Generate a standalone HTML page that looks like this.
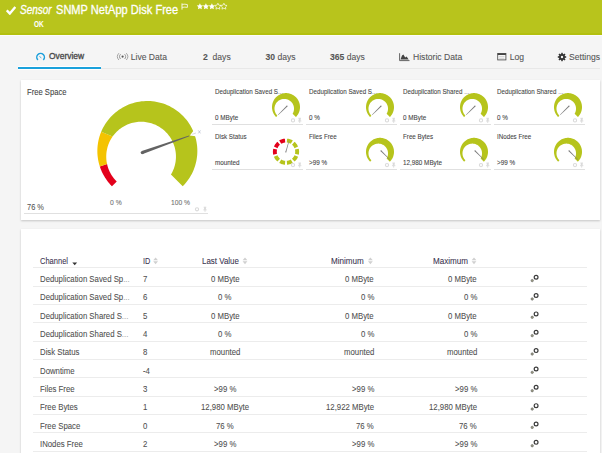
<!DOCTYPE html>
<html><head><meta charset="utf-8">
<style>
html,body{margin:0;padding:0;}
body{width:602px;height:453px;overflow:hidden;position:relative;background:#f5f5f5;font-family:"Liberation Sans",sans-serif;color:#4a4a4a;}
.a{position:absolute;white-space:nowrap;line-height:1;transform-origin:0 0;-webkit-text-stroke-width:0.08px;}
#hdr{position:absolute;left:0;top:0;width:602px;height:35px;background:#b8c41c;box-shadow:inset 0 -2px 0 #b3c00f;}
.panel{position:absolute;background:#fff;box-shadow:0 1px 2px rgba(0,0,0,0.2);}
.tab{font-size:8.6px;color:#555;}
.tt{font-size:6.6px;color:#444;}
.tv{font-size:6.6px;color:#444;}
.ul{position:absolute;height:1px;background:#e0e0e0;}
.row{position:absolute;left:33px;width:554px;height:1px;background:#ececec;}
.c{font-size:7.8px;color:#4f4f4f;}
.h{font-size:8px;color:#3a3350;}
</style></head><body>
<div id="hdr"></div>
<div style="position:absolute;left:0;top:35px;width:602px;height:1px;background:#fbfbfb"></div>
<div style="position:absolute;left:18px;top:68px;width:582px;height:1px;background:#e8e8e8"></div>
<div style="position:absolute;left:18px;top:66px;width:83px;height:4px;background:#fff"></div><div style="position:absolute;left:18px;top:67px;width:83px;height:2px;background:#1ba1db"></div>
<div class="panel" style="left:21px;top:80px;width:579px;height:140px"></div>
<div class="panel" style="left:21px;top:229px;width:579px;height:240px"></div>
<div class="ul" style="left:24px;top:213px;width:184px"></div>
<div class="a" style="left:215.00px;top:87.85px;font-size:7.27px;color:#444;transform:scaleX(0.857);">Deduplication Saved S<span style="color:#8a8a8a">...</span></div>
<div class="a" style="left:215.00px;top:114.94px;font-size:6.69px;color:#444;transform:scaleX(0.946);">0 MByte</div>
<div class="ul" style="left:212px;top:124.0px;width:91px"></div>
<div class="a" style="left:309.00px;top:87.85px;font-size:7.27px;color:#444;transform:scaleX(0.857);">Deduplication Saved S<span style="color:#8a8a8a">...</span></div>
<div class="a" style="left:309.00px;top:114.94px;font-size:6.69px;color:#444;transform:scaleX(0.946);">0 %</div>
<div class="ul" style="left:306px;top:124.0px;width:91px"></div>
<div class="a" style="left:403.00px;top:87.85px;font-size:7.27px;color:#444;transform:scaleX(0.857);">Deduplication Shared <span style="color:#8a8a8a">...</span></div>
<div class="a" style="left:403.00px;top:114.94px;font-size:6.69px;color:#444;transform:scaleX(0.946);">0 MByte</div>
<div class="ul" style="left:400px;top:124.0px;width:91px"></div>
<div class="a" style="left:497.00px;top:87.85px;font-size:7.27px;color:#444;transform:scaleX(0.857);">Deduplication Shared <span style="color:#8a8a8a">...</span></div>
<div class="a" style="left:497.00px;top:114.94px;font-size:6.69px;color:#444;transform:scaleX(0.946);">0 %</div>
<div class="ul" style="left:494px;top:124.0px;width:91px"></div>
<div class="a" style="left:215.00px;top:132.55px;font-size:7.27px;color:#444;transform:scaleX(0.857);">Disk Status</div>
<div class="a" style="left:215.00px;top:159.86px;font-size:6.69px;color:#444;transform:scaleX(0.946);">mounted</div>
<div class="ul" style="left:212px;top:168.7px;width:91px"></div>
<div class="a" style="left:309.00px;top:132.55px;font-size:7.27px;color:#444;transform:scaleX(0.857);">Files Free</div>
<div class="a" style="left:309.00px;top:159.86px;font-size:6.69px;color:#444;transform:scaleX(0.946);">&gt;99 %</div>
<div class="ul" style="left:306px;top:168.7px;width:91px"></div>
<div class="a" style="left:403.00px;top:132.55px;font-size:7.27px;color:#444;transform:scaleX(0.857);">Free Bytes</div>
<div class="a" style="left:403.00px;top:159.86px;font-size:6.69px;color:#444;transform:scaleX(0.946);">12,980 MByte</div>
<div class="ul" style="left:400px;top:168.7px;width:91px"></div>
<div class="a" style="left:497.00px;top:132.55px;font-size:7.27px;color:#444;transform:scaleX(0.857);">INodes Free</div>
<div class="a" style="left:497.00px;top:159.86px;font-size:6.69px;color:#444;transform:scaleX(0.946);">&gt;99 %</div>
<div class="ul" style="left:494px;top:168.7px;width:91px"></div>
<div class="a " style="left:6px;top:2px;"><svg width="10" height="9" viewBox="0 0 10 9"><path d="M0.8,4.3 L3.8,7.6 L9.3,1" stroke="#fff" stroke-width="2.3" fill="none"/></svg></div>
<div class="a" style="left:20.00px;top:4.34px;font-size:12.35px;color:#fff;transform:scaleX(0.809);font-style:italic;-webkit-text-stroke:0.3px #fff;">Sensor</div>
<div class="a" style="left:56.40px;top:4.12px;font-size:12.50px;color:#fff;transform:scaleX(0.885);-webkit-text-stroke:0.3px #fff;">SNMP NetApp Disk Free</div>
<div class="a" style="left:34.00px;top:21.09px;font-size:8.28px;color:#fff;transform:scaleX(0.781);font-weight:bold;">OK</div>
<div class="a" style="left:49.20px;top:51.82px;font-size:9.30px;color:#4a4a4a;transform:scaleX(0.907);-webkit-text-stroke:0.35px #4a4a4a;">Overview</div>
<div class="a tab" style="left:130.7px;top:53.2px;">Live Data</div>
<div class="a tab" style="left:203px;top:53.2px;"><b>2</b>&nbsp; days</div>
<div class="a tab" style="left:265.5px;top:53.2px;"><b>30</b> days</div>
<div class="a tab" style="left:330px;top:53.2px;"><b>365</b> days</div>
<div class="a tab" style="left:413px;top:53.2px;">Historic Data</div>
<div class="a tab" style="left:509.7px;top:53.2px;">Log</div>
<div class="a tab" style="left:569px;top:53.2px;">Settings</div>
<div class="a" style="left:27.00px;top:88.12px;font-size:8.72px;color:#444;transform:scaleX(0.876);">Free Space</div>
<div class="a" style="left:27.00px;top:201.68px;font-size:9.59px;color:#555;transform:scaleX(0.778);">76 %</div>
<div class="a" style="left:109.60px;top:199.20px;font-size:7.56px;color:#707070;transform:scaleX(0.898);">0 %</div>
<div class="a" style="left:171.00px;top:199.20px;font-size:7.56px;color:#707070;transform:scaleX(0.887);">100 %</div>
<div class="a" style="left:39.70px;top:256.00px;font-size:9.45px;color:#3a3350;transform:scaleX(0.796);">Channel</div>
<div class="a" style="left:142.70px;top:256.00px;font-size:9.45px;color:#3a3350;transform:scaleX(0.773);">ID</div>
<div class="a" style="left:202.00px;top:256.00px;font-size:9.45px;color:#3a3350;transform:scaleX(0.842);">Last Value</div>
<div class="a" style="left:331.20px;top:256.00px;font-size:9.45px;color:#3a3350;transform:scaleX(0.856);">Minimum</div>
<div class="a" style="left:432.50px;top:256.00px;font-size:9.45px;color:#3a3350;transform:scaleX(0.857);">Maximum</div>
<div class="row" style="top:267px"></div>
<div class="a" style="left:39.70px;top:274.92px;font-size:9.30px;color:#505050;transform:scaleX(0.838);">Deduplication Saved Sp<span style="color:#aaa">...</span></div>
<div class="a" style="left:143.10px;top:274.92px;font-size:9.30px;color:#505050;transform:scaleX(0.838);">7</div>
<div class="a" style="left:210.90px;top:274.92px;font-size:9.30px;color:#505050;transform:scaleX(0.838);">0 MByte</div>
<div class="a" style="left:345.41px;top:274.92px;font-size:9.30px;color:#505050;transform:scaleX(0.838);">0 MByte</div>
<div class="a" style="left:448.41px;top:274.92px;font-size:9.30px;color:#505050;transform:scaleX(0.838);">0 MByte</div>
<div class="row" style="top:285.65px"></div>
<div class="a" style="left:39.70px;top:293.27px;font-size:9.30px;color:#505050;transform:scaleX(0.838);">Deduplication Saved Sp<span style="color:#aaa">...</span></div>
<div class="a" style="left:143.10px;top:293.27px;font-size:9.30px;color:#505050;transform:scaleX(0.838);">6</div>
<div class="a" style="left:218.48px;top:293.27px;font-size:9.30px;color:#505050;transform:scaleX(0.838);">0 %</div>
<div class="a" style="left:360.57px;top:293.27px;font-size:9.30px;color:#505050;transform:scaleX(0.838);">0 %</div>
<div class="a" style="left:463.57px;top:293.27px;font-size:9.30px;color:#505050;transform:scaleX(0.838);">0 %</div>
<div class="row" style="top:304.00px"></div>
<div class="a" style="left:39.70px;top:311.62px;font-size:9.30px;color:#505050;transform:scaleX(0.838);">Deduplication Shared S<span style="color:#aaa">...</span></div>
<div class="a" style="left:143.10px;top:311.62px;font-size:9.30px;color:#505050;transform:scaleX(0.838);">5</div>
<div class="a" style="left:210.90px;top:311.62px;font-size:9.30px;color:#505050;transform:scaleX(0.838);">0 MByte</div>
<div class="a" style="left:345.41px;top:311.62px;font-size:9.30px;color:#505050;transform:scaleX(0.838);">0 MByte</div>
<div class="a" style="left:448.41px;top:311.62px;font-size:9.30px;color:#505050;transform:scaleX(0.838);">0 MByte</div>
<div class="row" style="top:322.35px"></div>
<div class="a" style="left:39.70px;top:329.97px;font-size:9.30px;color:#505050;transform:scaleX(0.838);">Deduplication Shared S<span style="color:#aaa">...</span></div>
<div class="a" style="left:143.10px;top:329.97px;font-size:9.30px;color:#505050;transform:scaleX(0.838);">4</div>
<div class="a" style="left:218.48px;top:329.97px;font-size:9.30px;color:#505050;transform:scaleX(0.838);">0 %</div>
<div class="a" style="left:360.57px;top:329.97px;font-size:9.30px;color:#505050;transform:scaleX(0.838);">0 %</div>
<div class="a" style="left:463.57px;top:329.97px;font-size:9.30px;color:#505050;transform:scaleX(0.838);">0 %</div>
<div class="row" style="top:340.70px"></div>
<div class="a" style="left:39.70px;top:348.32px;font-size:9.30px;color:#505050;transform:scaleX(0.838);">Disk Status</div>
<div class="a" style="left:143.10px;top:348.32px;font-size:9.30px;color:#505050;transform:scaleX(0.838);">8</div>
<div class="a" style="left:210.03px;top:348.32px;font-size:9.30px;color:#505050;transform:scaleX(0.838);">mounted</div>
<div class="a" style="left:343.66px;top:348.32px;font-size:9.30px;color:#505050;transform:scaleX(0.838);">mounted</div>
<div class="a" style="left:446.66px;top:348.32px;font-size:9.30px;color:#505050;transform:scaleX(0.838);">mounted</div>
<div class="row" style="top:359.05px"></div>
<div class="a" style="left:39.70px;top:366.67px;font-size:9.30px;color:#505050;transform:scaleX(0.838);">Downtime</div>
<div class="a" style="left:143.10px;top:366.67px;font-size:9.30px;color:#505050;transform:scaleX(0.838);">-4</div>
<div class="row" style="top:377.40px"></div>
<div class="a" style="left:39.70px;top:385.02px;font-size:9.30px;color:#505050;transform:scaleX(0.838);">Files Free</div>
<div class="a" style="left:143.10px;top:385.02px;font-size:9.30px;color:#505050;transform:scaleX(0.838);">3</div>
<div class="a" style="left:214.04px;top:385.02px;font-size:9.30px;color:#505050;transform:scaleX(0.838);">&gt;99 %</div>
<div class="a" style="left:351.68px;top:385.02px;font-size:9.30px;color:#505050;transform:scaleX(0.838);">&gt;99 %</div>
<div class="a" style="left:454.68px;top:385.02px;font-size:9.30px;color:#505050;transform:scaleX(0.838);">&gt;99 %</div>
<div class="row" style="top:395.75px"></div>
<div class="a" style="left:39.70px;top:403.37px;font-size:9.30px;color:#505050;transform:scaleX(0.838);">Free Bytes</div>
<div class="a" style="left:143.10px;top:403.37px;font-size:9.30px;color:#505050;transform:scaleX(0.838);">1</div>
<div class="a" style="left:201.15px;top:403.37px;font-size:9.30px;color:#505050;transform:scaleX(0.838);">12,980 MByte</div>
<div class="a" style="left:325.91px;top:403.37px;font-size:9.30px;color:#505050;transform:scaleX(0.838);">12,922 MByte</div>
<div class="a" style="left:428.91px;top:403.37px;font-size:9.30px;color:#505050;transform:scaleX(0.838);">12,980 MByte</div>
<div class="row" style="top:414.10px"></div>
<div class="a" style="left:39.70px;top:421.72px;font-size:9.30px;color:#505050;transform:scaleX(0.838);">Free Space</div>
<div class="a" style="left:143.10px;top:421.72px;font-size:9.30px;color:#505050;transform:scaleX(0.838);">0</div>
<div class="a" style="left:216.32px;top:421.72px;font-size:9.30px;color:#505050;transform:scaleX(0.838);">76 %</div>
<div class="a" style="left:356.24px;top:421.72px;font-size:9.30px;color:#505050;transform:scaleX(0.838);">76 %</div>
<div class="a" style="left:459.24px;top:421.72px;font-size:9.30px;color:#505050;transform:scaleX(0.838);">76 %</div>
<div class="row" style="top:432.45px"></div>
<div class="a" style="left:39.70px;top:440.07px;font-size:9.30px;color:#505050;transform:scaleX(0.838);">INodes Free</div>
<div class="a" style="left:143.10px;top:440.07px;font-size:9.30px;color:#505050;transform:scaleX(0.838);">2</div>
<div class="a" style="left:214.04px;top:440.07px;font-size:9.30px;color:#505050;transform:scaleX(0.838);">&gt;99 %</div>
<div class="a" style="left:351.68px;top:440.07px;font-size:9.30px;color:#505050;transform:scaleX(0.838);">&gt;99 %</div>
<div class="a" style="left:454.68px;top:440.07px;font-size:9.30px;color:#505050;transform:scaleX(0.838);">&gt;99 %</div>
<div class="row" style="top:450.80px"></div>
<svg style="position:absolute;left:0;top:0" width="602" height="453" viewBox="0 0 602 453">
<path d="M111.99,186.36 L111.58,185.94 L111.17,185.51 L110.77,185.08 L110.37,184.65 L109.97,184.21 L109.59,183.77 L109.20,183.32 L108.82,182.87 L108.45,182.42 L108.08,181.95 L107.72,181.49 L107.37,181.02 L107.01,180.55 L106.67,180.07 L106.33,179.59 L106.00,179.10 L105.67,178.62 L105.35,178.12 L105.03,177.63 L104.72,177.12 L104.41,176.62 L104.11,176.11 L103.82,175.60 L103.53,175.09 L103.25,174.57 L102.98,174.05 L102.71,173.52 L102.45,173.00 L102.19,172.47 L101.94,171.93 L101.70,171.40 L101.46,170.86 L101.23,170.32 L101.01,169.77 L100.79,169.22 L100.58,168.67 L100.37,168.12 L100.17,167.57 L99.98,167.01 L99.80,166.45 L107.06,164.09 L107.18,164.58 L107.29,165.07 L107.42,165.55 L107.55,166.04 L107.69,166.52 L107.84,167.00 L107.99,167.48 L108.15,167.96 L108.32,168.44 L108.50,168.91 L108.68,169.38 L108.87,169.85 L109.06,170.32 L109.27,170.78 L109.48,171.24 L109.69,171.70 L109.92,172.16 L110.15,172.61 L110.38,173.06 L110.62,173.51 L110.87,173.95 L111.13,174.39 L111.39,174.82 L111.66,175.25 L111.94,175.68 L112.22,176.10 L112.51,176.52 L112.80,176.94 L113.10,177.35 L113.41,177.76 L113.72,178.16 L114.04,178.56 L114.36,178.95 L114.69,179.34 L115.03,179.72 L115.37,180.10 L115.71,180.48 L116.07,180.84 L116.42,181.21 L116.78,181.57Z" fill="#e3001b"/>
<path d="M99.80,166.45 L99.53,165.61 L99.28,164.76 L99.05,163.91 L98.82,163.05 L98.62,162.19 L98.43,161.33 L98.25,160.47 L98.09,159.60 L97.95,158.72 L97.82,157.85 L97.71,156.97 L97.61,156.10 L97.53,155.22 L97.46,154.34 L97.41,153.45 L97.37,152.57 L97.35,151.69 L97.35,150.80 L97.36,149.92 L97.39,149.04 L97.43,148.15 L97.49,147.27 L97.56,146.39 L97.65,145.51 L97.76,144.64 L97.88,143.76 L98.01,142.89 L98.16,142.02 L98.33,141.15 L98.51,140.28 L98.71,139.42 L98.92,138.57 L99.15,137.71 L99.39,136.86 L99.65,136.02 L99.92,135.18 L100.21,134.34 L100.51,133.51 L100.83,132.69 L101.16,131.87 L112.57,136.59 L112.18,137.15 L111.80,137.73 L111.44,138.31 L111.08,138.90 L110.73,139.50 L110.40,140.11 L110.08,140.72 L109.76,141.35 L109.46,141.98 L109.18,142.62 L108.90,143.27 L108.63,143.93 L108.38,144.59 L108.15,145.26 L107.92,145.94 L107.71,146.62 L107.51,147.31 L107.33,148.01 L107.16,148.71 L107.00,149.41 L106.86,150.13 L106.73,150.84 L106.62,151.56 L106.52,152.28 L106.44,153.01 L106.37,153.74 L106.31,154.47 L106.28,155.21 L106.26,155.95 L106.25,156.68 L106.26,157.43 L106.29,158.17 L106.33,158.91 L106.38,159.65 L106.46,160.39 L106.55,161.14 L106.65,161.88 L106.77,162.62 L106.91,163.35 L107.06,164.09Z" fill="#f4c300"/>
<path d="M101.16,131.87 L102.05,129.84 L103.02,127.86 L104.09,125.93 L105.24,124.04 L106.47,122.21 L107.78,120.43 L109.17,118.71 L110.63,117.06 L112.17,115.47 L113.77,113.95 L115.44,112.51 L117.17,111.13 L118.96,109.84 L120.81,108.63 L122.71,107.50 L124.65,106.45 L126.64,105.49 L128.67,104.62 L130.74,103.84 L132.84,103.15 L134.96,102.56 L137.11,102.06 L139.29,101.65 L141.47,101.35 L143.67,101.14 L145.88,101.02 L148.09,101.01 L150.29,101.09 L152.50,101.27 L154.69,101.54 L156.86,101.91 L159.02,102.38 L161.16,102.94 L163.27,103.60 L165.34,104.35 L167.39,105.19 L169.39,106.12 L171.35,107.14 L173.27,108.24 L175.13,109.43 L176.94,110.69 L178.69,112.04 L180.38,113.46 L182.00,114.96 L183.56,116.52 L185.05,118.16 L186.46,119.85 L187.80,121.61 L189.06,123.43 L190.24,125.29 L191.33,127.21 L192.34,129.18 L193.26,131.19 L194.09,133.23 L194.83,135.32 L195.47,137.43 L196.03,139.57 L196.48,141.73 L196.84,143.91 L197.11,146.10 L197.28,148.30 L197.35,150.51 L197.32,152.72 L197.20,154.92 L196.97,157.12 L196.66,159.31 L196.24,161.48 L195.73,163.62 L195.13,165.75 L194.43,167.84 L193.64,169.91 L192.76,171.93 L191.79,173.92 L190.73,175.86 L189.59,177.75 L188.37,179.59 L187.07,181.37 L185.69,183.10 L184.23,184.76 L182.71,186.36 L170.94,174.59 L171.70,173.28 L172.38,171.96 L173.01,170.62 L173.56,169.27 L174.06,167.92 L174.50,166.56 L174.87,165.19 L175.19,163.83 L175.45,162.48 L175.65,161.13 L175.80,159.78 L175.90,158.45 L175.95,157.13 L175.94,155.82 L175.89,154.52 L175.79,153.24 L175.64,151.97 L175.45,150.72 L175.22,149.49 L174.94,148.28 L174.63,147.09 L174.27,145.92 L173.88,144.77 L173.45,143.64 L172.98,142.53 L172.48,141.45 L171.95,140.38 L171.38,139.35 L170.78,138.33 L170.14,137.34 L169.48,136.37 L168.78,135.43 L168.06,134.51 L167.30,133.62 L166.51,132.75 L165.70,131.91 L164.86,131.10 L163.99,130.32 L163.09,129.56 L162.16,128.83 L161.21,128.14 L160.23,127.47 L159.22,126.83 L158.19,126.23 L157.13,125.65 L156.04,125.12 L154.93,124.61 L153.80,124.15 L152.64,123.72 L151.46,123.32 L150.25,122.97 L149.02,122.66 L147.77,122.39 L146.50,122.17 L145.21,121.99 L143.90,121.86 L142.58,121.78 L141.23,121.75 L139.88,121.77 L138.51,121.85 L137.13,121.98 L135.74,122.17 L134.34,122.41 L132.94,122.72 L131.54,123.09 L130.14,123.52 L128.74,124.02 L127.35,124.58 L125.97,125.21 L124.60,125.90 L123.25,126.67 L121.93,127.50 L120.62,128.40 L119.35,129.37 L118.11,130.41 L116.91,131.51 L115.75,132.69 L114.64,133.92 L113.57,135.23 L112.57,136.59Z" fill="#b6c41c"/>
<path d="M194.63,129.35 L197.29,136.49 L189.85,135.61Z" fill="#fff"/>
<path d="M142.84,154.11 L189.37,136.32 L189.06,135.47 L141.76,151.09Z" fill="#636363"/><circle cx="142.30" cy="152.60" r="1.60" fill="#636363"/>
<path d="M192.2,134.3 L196,133" stroke="#b8b8b8" stroke-width="0.5"/><path d="M198.3,130.4 l2.2,3 M200.5,130.4 l-2.2,3" stroke="#a8b0c4" stroke-width="0.6"/>
<path d="M276.10,117.00 L275.53,116.40 L275.01,115.77 L274.51,115.11 L274.06,114.41 L273.65,113.70 L273.29,112.96 L272.96,112.20 L272.69,111.43 L272.45,110.63 L272.27,109.83 L272.13,109.02 L272.04,108.20 L272.00,107.37 L272.01,106.55 L272.07,105.73 L272.17,104.91 L272.33,104.10 L272.53,103.30 L272.77,102.51 L273.07,101.74 L273.40,100.99 L273.79,100.26 L274.21,99.55 L274.67,98.87 L275.18,98.22 L275.72,97.60 L276.30,97.01 L276.91,96.45 L277.55,95.94 L278.22,95.46 L278.92,95.02 L279.64,94.63 L280.39,94.27 L281.15,93.97 L281.94,93.70 L282.73,93.49 L283.54,93.32 L284.35,93.20 L285.18,93.12 L286.00,93.10 L286.82,93.12 L287.65,93.20 L288.46,93.32 L289.27,93.49 L290.06,93.70 L290.85,93.97 L291.61,94.27 L292.36,94.63 L293.08,95.02 L293.78,95.46 L294.45,95.94 L295.09,96.45 L295.70,97.01 L296.28,97.60 L296.82,98.22 L297.33,98.87 L297.79,99.55 L298.21,100.26 L298.60,100.99 L298.93,101.74 L299.23,102.51 L299.47,103.30 L299.67,104.10 L299.83,104.91 L299.93,105.73 L299.99,106.55 L300.00,107.37 L299.96,108.20 L299.87,109.02 L299.73,109.83 L299.55,110.63 L299.31,111.43 L299.04,112.20 L298.71,112.96 L298.35,113.70 L297.94,114.41 L297.49,115.11 L296.99,115.77 L296.47,116.40 L295.90,117.00 L292.61,113.71 L292.88,113.22 L293.13,112.72 L293.34,112.22 L293.52,111.71 L293.67,111.20 L293.80,110.69 L293.89,110.19 L293.95,109.68 L293.99,109.19 L294.01,108.69 L294.00,108.21 L293.96,107.73 L293.91,107.26 L293.83,106.79 L293.73,106.34 L293.61,105.90 L293.47,105.46 L293.31,105.04 L293.13,104.63 L292.94,104.23 L292.73,103.84 L292.50,103.46 L292.26,103.09 L292.00,102.74 L291.73,102.40 L291.44,102.07 L291.14,101.76 L290.82,101.45 L290.49,101.17 L290.15,100.89 L289.79,100.63 L289.42,100.39 L289.03,100.16 L288.64,99.95 L288.23,99.76 L287.81,99.58 L287.37,99.42 L286.93,99.28 L286.47,99.17 L286.00,99.07 L285.52,98.99 L285.03,98.94 L284.54,98.91 L284.03,98.91 L283.52,98.94 L283.01,98.99 L282.49,99.07 L281.97,99.18 L281.44,99.32 L280.92,99.50 L280.40,99.70 L279.89,99.94 L279.38,100.21 L278.88,100.52 L278.40,100.86 L277.93,101.24 L277.48,101.64 L277.05,102.09 L276.64,102.56 L276.26,103.07 L275.91,103.60 L275.59,104.16 L275.31,104.75 L275.07,105.37 L274.86,106.00 L274.70,106.66 L274.58,107.32 L274.51,108.00 L274.49,108.69 L274.52,109.38 L274.59,110.08 L274.72,110.77 L274.90,111.45 L275.12,112.12 L275.40,112.77 L275.72,113.40 L276.08,114.01 L276.50,114.59 L276.95,115.14 L277.44,115.66Z" fill="#b6c41c"/>
<path d="M286.61,105.71 L277.98,114.76 L278.34,115.12 L287.39,106.49Z" fill="#7a7a7a"/><circle cx="287.00" cy="106.10" r="0.55" fill="#7a7a7a"/>
<circle cx="293" cy="120.4" r="1.6" fill="none" stroke="#dadada" stroke-width="1.1"/>
<path d="M298.4,118.30000000000001 h2.6 M299.7,118.30000000000001 v4.6 M298.0,121.0 h3.4" stroke="#dadada" stroke-width="0.9" fill="none"/><path d="M298.8,118.4 h1.8 v2.4 h-1.8z" fill="#dadada"/>
<path d="M370.10,117.00 L369.53,116.40 L369.01,115.77 L368.51,115.11 L368.06,114.41 L367.65,113.70 L367.29,112.96 L366.96,112.20 L366.69,111.43 L366.45,110.63 L366.27,109.83 L366.13,109.02 L366.04,108.20 L366.00,107.37 L366.01,106.55 L366.07,105.73 L366.17,104.91 L366.33,104.10 L366.53,103.30 L366.77,102.51 L367.07,101.74 L367.40,100.99 L367.79,100.26 L368.21,99.55 L368.67,98.87 L369.18,98.22 L369.72,97.60 L370.30,97.01 L370.91,96.45 L371.55,95.94 L372.22,95.46 L372.92,95.02 L373.64,94.63 L374.39,94.27 L375.15,93.97 L375.94,93.70 L376.73,93.49 L377.54,93.32 L378.35,93.20 L379.18,93.12 L380.00,93.10 L380.82,93.12 L381.65,93.20 L382.46,93.32 L383.27,93.49 L384.06,93.70 L384.85,93.97 L385.61,94.27 L386.36,94.63 L387.08,95.02 L387.78,95.46 L388.45,95.94 L389.09,96.45 L389.70,97.01 L390.28,97.60 L390.82,98.22 L391.33,98.87 L391.79,99.55 L392.21,100.26 L392.60,100.99 L392.93,101.74 L393.23,102.51 L393.47,103.30 L393.67,104.10 L393.83,104.91 L393.93,105.73 L393.99,106.55 L394.00,107.37 L393.96,108.20 L393.87,109.02 L393.73,109.83 L393.55,110.63 L393.31,111.43 L393.04,112.20 L392.71,112.96 L392.35,113.70 L391.94,114.41 L391.49,115.11 L390.99,115.77 L390.47,116.40 L389.90,117.00 L386.61,113.71 L386.88,113.22 L387.13,112.72 L387.34,112.22 L387.52,111.71 L387.67,111.20 L387.80,110.69 L387.89,110.19 L387.95,109.68 L387.99,109.19 L388.01,108.69 L388.00,108.21 L387.96,107.73 L387.91,107.26 L387.83,106.79 L387.73,106.34 L387.61,105.90 L387.47,105.46 L387.31,105.04 L387.13,104.63 L386.94,104.23 L386.73,103.84 L386.50,103.46 L386.26,103.09 L386.00,102.74 L385.73,102.40 L385.44,102.07 L385.14,101.76 L384.82,101.45 L384.49,101.17 L384.15,100.89 L383.79,100.63 L383.42,100.39 L383.03,100.16 L382.64,99.95 L382.23,99.76 L381.81,99.58 L381.37,99.42 L380.93,99.28 L380.47,99.17 L380.00,99.07 L379.52,98.99 L379.03,98.94 L378.54,98.91 L378.03,98.91 L377.52,98.94 L377.01,98.99 L376.49,99.07 L375.97,99.18 L375.44,99.32 L374.92,99.50 L374.40,99.70 L373.89,99.94 L373.38,100.21 L372.88,100.52 L372.40,100.86 L371.93,101.24 L371.48,101.64 L371.05,102.09 L370.64,102.56 L370.26,103.07 L369.91,103.60 L369.59,104.16 L369.31,104.75 L369.07,105.37 L368.86,106.00 L368.70,106.66 L368.58,107.32 L368.51,108.00 L368.49,108.69 L368.52,109.38 L368.59,110.08 L368.72,110.77 L368.90,111.45 L369.12,112.12 L369.40,112.77 L369.72,113.40 L370.08,114.01 L370.50,114.59 L370.95,115.14 L371.44,115.66Z" fill="#b6c41c"/>
<path d="M380.61,105.71 L371.98,114.76 L372.34,115.12 L381.39,106.49Z" fill="#7a7a7a"/><circle cx="381.00" cy="106.10" r="0.55" fill="#7a7a7a"/>
<circle cx="387" cy="120.4" r="1.6" fill="none" stroke="#dadada" stroke-width="1.1"/>
<path d="M392.4,118.30000000000001 h2.6 M393.7,118.30000000000001 v4.6 M392.0,121.0 h3.4" stroke="#dadada" stroke-width="0.9" fill="none"/><path d="M392.8,118.4 h1.8 v2.4 h-1.8z" fill="#dadada"/>
<path d="M464.10,117.00 L463.53,116.40 L463.01,115.77 L462.51,115.11 L462.06,114.41 L461.65,113.70 L461.29,112.96 L460.96,112.20 L460.69,111.43 L460.45,110.63 L460.27,109.83 L460.13,109.02 L460.04,108.20 L460.00,107.37 L460.01,106.55 L460.07,105.73 L460.17,104.91 L460.33,104.10 L460.53,103.30 L460.77,102.51 L461.07,101.74 L461.40,100.99 L461.79,100.26 L462.21,99.55 L462.67,98.87 L463.18,98.22 L463.72,97.60 L464.30,97.01 L464.91,96.45 L465.55,95.94 L466.22,95.46 L466.92,95.02 L467.64,94.63 L468.39,94.27 L469.15,93.97 L469.94,93.70 L470.73,93.49 L471.54,93.32 L472.35,93.20 L473.18,93.12 L474.00,93.10 L474.82,93.12 L475.65,93.20 L476.46,93.32 L477.27,93.49 L478.06,93.70 L478.85,93.97 L479.61,94.27 L480.36,94.63 L481.08,95.02 L481.78,95.46 L482.45,95.94 L483.09,96.45 L483.70,97.01 L484.28,97.60 L484.82,98.22 L485.33,98.87 L485.79,99.55 L486.21,100.26 L486.60,100.99 L486.93,101.74 L487.23,102.51 L487.47,103.30 L487.67,104.10 L487.83,104.91 L487.93,105.73 L487.99,106.55 L488.00,107.37 L487.96,108.20 L487.87,109.02 L487.73,109.83 L487.55,110.63 L487.31,111.43 L487.04,112.20 L486.71,112.96 L486.35,113.70 L485.94,114.41 L485.49,115.11 L484.99,115.77 L484.47,116.40 L483.90,117.00 L480.61,113.71 L480.88,113.22 L481.13,112.72 L481.34,112.22 L481.52,111.71 L481.67,111.20 L481.80,110.69 L481.89,110.19 L481.95,109.68 L481.99,109.19 L482.01,108.69 L482.00,108.21 L481.96,107.73 L481.91,107.26 L481.83,106.79 L481.73,106.34 L481.61,105.90 L481.47,105.46 L481.31,105.04 L481.13,104.63 L480.94,104.23 L480.73,103.84 L480.50,103.46 L480.26,103.09 L480.00,102.74 L479.73,102.40 L479.44,102.07 L479.14,101.76 L478.82,101.45 L478.49,101.17 L478.15,100.89 L477.79,100.63 L477.42,100.39 L477.03,100.16 L476.64,99.95 L476.23,99.76 L475.81,99.58 L475.37,99.42 L474.93,99.28 L474.47,99.17 L474.00,99.07 L473.52,98.99 L473.03,98.94 L472.54,98.91 L472.03,98.91 L471.52,98.94 L471.01,98.99 L470.49,99.07 L469.97,99.18 L469.44,99.32 L468.92,99.50 L468.40,99.70 L467.89,99.94 L467.38,100.21 L466.88,100.52 L466.40,100.86 L465.93,101.24 L465.48,101.64 L465.05,102.09 L464.64,102.56 L464.26,103.07 L463.91,103.60 L463.59,104.16 L463.31,104.75 L463.07,105.37 L462.86,106.00 L462.70,106.66 L462.58,107.32 L462.51,108.00 L462.49,108.69 L462.52,109.38 L462.59,110.08 L462.72,110.77 L462.90,111.45 L463.12,112.12 L463.40,112.77 L463.72,113.40 L464.08,114.01 L464.50,114.59 L464.95,115.14 L465.44,115.66Z" fill="#b6c41c"/>
<path d="M474.61,105.71 L465.98,114.76 L466.34,115.12 L475.39,106.49Z" fill="#7a7a7a"/><circle cx="475.00" cy="106.10" r="0.55" fill="#7a7a7a"/>
<circle cx="481" cy="120.4" r="1.6" fill="none" stroke="#dadada" stroke-width="1.1"/>
<path d="M486.4,118.30000000000001 h2.6 M487.7,118.30000000000001 v4.6 M486.0,121.0 h3.4" stroke="#dadada" stroke-width="0.9" fill="none"/><path d="M486.8,118.4 h1.8 v2.4 h-1.8z" fill="#dadada"/>
<path d="M558.10,117.00 L557.53,116.40 L557.01,115.77 L556.51,115.11 L556.06,114.41 L555.65,113.70 L555.29,112.96 L554.96,112.20 L554.69,111.43 L554.45,110.63 L554.27,109.83 L554.13,109.02 L554.04,108.20 L554.00,107.37 L554.01,106.55 L554.07,105.73 L554.17,104.91 L554.33,104.10 L554.53,103.30 L554.77,102.51 L555.07,101.74 L555.40,100.99 L555.79,100.26 L556.21,99.55 L556.67,98.87 L557.18,98.22 L557.72,97.60 L558.30,97.01 L558.91,96.45 L559.55,95.94 L560.22,95.46 L560.92,95.02 L561.64,94.63 L562.39,94.27 L563.15,93.97 L563.94,93.70 L564.73,93.49 L565.54,93.32 L566.35,93.20 L567.18,93.12 L568.00,93.10 L568.82,93.12 L569.65,93.20 L570.46,93.32 L571.27,93.49 L572.06,93.70 L572.85,93.97 L573.61,94.27 L574.36,94.63 L575.08,95.02 L575.78,95.46 L576.45,95.94 L577.09,96.45 L577.70,97.01 L578.28,97.60 L578.82,98.22 L579.33,98.87 L579.79,99.55 L580.21,100.26 L580.60,100.99 L580.93,101.74 L581.23,102.51 L581.47,103.30 L581.67,104.10 L581.83,104.91 L581.93,105.73 L581.99,106.55 L582.00,107.37 L581.96,108.20 L581.87,109.02 L581.73,109.83 L581.55,110.63 L581.31,111.43 L581.04,112.20 L580.71,112.96 L580.35,113.70 L579.94,114.41 L579.49,115.11 L578.99,115.77 L578.47,116.40 L577.90,117.00 L574.61,113.71 L574.88,113.22 L575.13,112.72 L575.34,112.22 L575.52,111.71 L575.67,111.20 L575.80,110.69 L575.89,110.19 L575.95,109.68 L575.99,109.19 L576.01,108.69 L576.00,108.21 L575.96,107.73 L575.91,107.26 L575.83,106.79 L575.73,106.34 L575.61,105.90 L575.47,105.46 L575.31,105.04 L575.13,104.63 L574.94,104.23 L574.73,103.84 L574.50,103.46 L574.26,103.09 L574.00,102.74 L573.73,102.40 L573.44,102.07 L573.14,101.76 L572.82,101.45 L572.49,101.17 L572.15,100.89 L571.79,100.63 L571.42,100.39 L571.03,100.16 L570.64,99.95 L570.23,99.76 L569.81,99.58 L569.37,99.42 L568.93,99.28 L568.47,99.17 L568.00,99.07 L567.52,98.99 L567.03,98.94 L566.54,98.91 L566.03,98.91 L565.52,98.94 L565.01,98.99 L564.49,99.07 L563.97,99.18 L563.44,99.32 L562.92,99.50 L562.40,99.70 L561.89,99.94 L561.38,100.21 L560.88,100.52 L560.40,100.86 L559.93,101.24 L559.48,101.64 L559.05,102.09 L558.64,102.56 L558.26,103.07 L557.91,103.60 L557.59,104.16 L557.31,104.75 L557.07,105.37 L556.86,106.00 L556.70,106.66 L556.58,107.32 L556.51,108.00 L556.49,108.69 L556.52,109.38 L556.59,110.08 L556.72,110.77 L556.90,111.45 L557.12,112.12 L557.40,112.77 L557.72,113.40 L558.08,114.01 L558.50,114.59 L558.95,115.14 L559.44,115.66Z" fill="#b6c41c"/>
<path d="M568.61,105.71 L559.98,114.76 L560.34,115.12 L569.39,106.49Z" fill="#7a7a7a"/><circle cx="569.00" cy="106.10" r="0.55" fill="#7a7a7a"/>
<circle cx="575" cy="120.4" r="1.6" fill="none" stroke="#dadada" stroke-width="1.1"/>
<path d="M580.4000000000001,118.30000000000001 h2.6 M581.7,118.30000000000001 v4.6 M580.0,121.0 h3.4" stroke="#dadada" stroke-width="0.9" fill="none"/><path d="M580.8000000000001,118.4 h1.8 v2.4 h-1.8z" fill="#dadada"/>
<path d="M287.10,138.65 L287.85,138.73 L288.59,138.86 L289.32,139.03 L290.05,139.24 L290.76,139.49 L291.45,139.79 L292.13,140.12 L292.79,140.49 L290.77,143.83 L290.30,143.57 L289.83,143.34 L289.34,143.13 L288.84,142.95 L288.33,142.80 L287.82,142.68 L287.30,142.59 L286.77,142.53Z" fill="#b6c41c"/>
<path d="M294.56,141.78 L295.12,142.29 L295.64,142.83 L296.14,143.40 L296.60,144.00 L297.02,144.62 L297.41,145.27 L297.76,145.94 L298.08,146.62 L294.48,148.13 L294.26,147.65 L294.02,147.18 L293.74,146.73 L293.44,146.29 L293.12,145.87 L292.77,145.47 L292.40,145.09 L292.01,144.74Z" fill="#b6c41c"/>
<path d="M298.75,148.71 L298.90,149.45 L299.01,150.19 L299.08,150.95 L299.10,151.70 L299.08,152.45 L299.01,153.21 L298.90,153.95 L298.75,154.69 L294.96,153.80 L295.06,153.28 L295.14,152.76 L295.18,152.23 L295.20,151.70 L295.18,151.17 L295.14,150.64 L295.06,150.12 L294.96,149.60Z" fill="#b6c41c"/>
<path d="M298.08,156.78 L297.76,157.46 L297.41,158.13 L297.02,158.78 L296.60,159.40 L296.14,160.00 L295.64,160.57 L295.12,161.11 L294.56,161.62 L292.01,158.66 L292.40,158.31 L292.77,157.93 L293.12,157.53 L293.44,157.11 L293.74,156.67 L294.02,156.22 L294.26,155.75 L294.48,155.27Z" fill="#b6c41c"/>
<path d="M292.79,162.91 L292.13,163.28 L291.45,163.61 L290.76,163.91 L290.05,164.16 L289.32,164.37 L288.59,164.54 L287.85,164.67 L287.10,164.75 L286.77,160.87 L287.30,160.81 L287.82,160.72 L288.33,160.60 L288.84,160.45 L289.34,160.27 L289.83,160.06 L290.30,159.83 L290.77,159.57Z" fill="#b6c41c"/>
<path d="M284.90,164.75 L284.15,164.67 L283.41,164.54 L282.68,164.37 L281.95,164.16 L281.24,163.91 L280.55,163.61 L279.87,163.28 L279.21,162.91 L281.23,159.57 L281.70,159.83 L282.17,160.06 L282.66,160.27 L283.16,160.45 L283.67,160.60 L284.18,160.72 L284.70,160.81 L285.23,160.87Z" fill="#b6c41c"/>
<path d="M277.44,161.62 L276.88,161.11 L276.36,160.57 L275.86,160.00 L275.40,159.40 L274.98,158.78 L274.59,158.13 L274.24,157.46 L273.92,156.78 L277.52,155.27 L277.74,155.75 L277.98,156.22 L278.26,156.67 L278.56,157.11 L278.88,157.53 L279.23,157.93 L279.60,158.31 L279.99,158.66Z" fill="#b6c41c"/>
<path d="M273.25,154.69 L273.10,153.95 L272.99,153.21 L272.92,152.45 L272.90,151.70 L272.92,150.95 L272.99,150.19 L273.10,149.45 L273.25,148.71 L277.04,149.60 L276.94,150.12 L276.86,150.64 L276.82,151.17 L276.80,151.70 L276.82,152.23 L276.86,152.76 L276.94,153.28 L277.04,153.80Z" fill="#e3001b"/>
<path d="M273.92,146.62 L274.24,145.94 L274.59,145.27 L274.98,144.62 L275.40,144.00 L275.86,143.40 L276.36,142.83 L276.88,142.29 L277.44,141.78 L279.99,144.74 L279.60,145.09 L279.23,145.47 L278.88,145.87 L278.56,146.29 L278.26,146.73 L277.98,147.18 L277.74,147.65 L277.52,148.13Z" fill="#e3001b"/>
<path d="M279.21,140.49 L279.87,140.12 L280.55,139.79 L281.24,139.49 L281.95,139.24 L282.68,139.03 L283.41,138.86 L284.15,138.73 L284.90,138.65 L285.23,142.53 L284.70,142.59 L284.18,142.68 L283.67,142.80 L283.16,142.95 L282.66,143.13 L282.17,143.34 L281.70,143.57 L281.23,143.83Z" fill="#e3001b"/>
<path d="M286.28,152.24 L289.40,140.44 L288.92,140.30 L285.32,151.96Z" fill="#8a8a8a"/><circle cx="285.80" cy="152.10" r="0.50" fill="#8a8a8a"/>
<circle cx="293" cy="165.10000000000002" r="1.6" fill="none" stroke="#dadada" stroke-width="1.1"/>
<path d="M298.4,163.00000000000003 h2.6 M299.7,163.00000000000003 v4.6 M298.0,165.70000000000002 h3.4" stroke="#dadada" stroke-width="0.9" fill="none"/><path d="M298.8,163.10000000000002 h1.8 v2.4 h-1.8z" fill="#dadada"/>
<path d="M370.10,161.70 L369.53,161.10 L369.01,160.47 L368.51,159.81 L368.06,159.11 L367.65,158.40 L367.29,157.66 L366.96,156.90 L366.69,156.13 L366.45,155.33 L366.27,154.53 L366.13,153.72 L366.04,152.90 L366.00,152.07 L366.01,151.25 L366.07,150.43 L366.17,149.61 L366.33,148.80 L366.53,148.00 L366.77,147.21 L367.07,146.44 L367.40,145.69 L367.79,144.96 L368.21,144.25 L368.67,143.57 L369.18,142.92 L369.72,142.30 L370.30,141.71 L370.91,141.15 L371.55,140.64 L372.22,140.16 L372.92,139.72 L373.64,139.33 L374.39,138.97 L375.15,138.67 L375.94,138.40 L376.73,138.19 L377.54,138.02 L378.35,137.90 L379.18,137.82 L380.00,137.80 L380.82,137.82 L381.65,137.90 L382.46,138.02 L383.27,138.19 L384.06,138.40 L384.85,138.67 L385.61,138.97 L386.36,139.33 L387.08,139.72 L387.78,140.16 L388.45,140.64 L389.09,141.15 L389.70,141.71 L390.28,142.30 L390.82,142.92 L391.33,143.57 L391.79,144.25 L392.21,144.96 L392.60,145.69 L392.93,146.44 L393.23,147.21 L393.47,148.00 L393.67,148.80 L393.83,149.61 L393.93,150.43 L393.99,151.25 L394.00,152.07 L393.96,152.90 L393.87,153.72 L393.73,154.53 L393.55,155.33 L393.31,156.13 L393.04,156.90 L392.71,157.66 L392.35,158.40 L391.94,159.11 L391.49,159.81 L390.99,160.47 L390.47,161.10 L389.90,161.70 L386.61,158.41 L386.88,157.92 L387.13,157.42 L387.34,156.92 L387.52,156.41 L387.67,155.90 L387.80,155.39 L387.89,154.89 L387.95,154.38 L387.99,153.89 L388.01,153.39 L388.00,152.91 L387.96,152.43 L387.91,151.96 L387.83,151.49 L387.73,151.04 L387.61,150.60 L387.47,150.16 L387.31,149.74 L387.13,149.33 L386.94,148.93 L386.73,148.54 L386.50,148.16 L386.26,147.79 L386.00,147.44 L385.73,147.10 L385.44,146.77 L385.14,146.46 L384.82,146.15 L384.49,145.87 L384.15,145.59 L383.79,145.33 L383.42,145.09 L383.03,144.86 L382.64,144.65 L382.23,144.46 L381.81,144.28 L381.37,144.12 L380.93,143.98 L380.47,143.87 L380.00,143.77 L379.52,143.69 L379.03,143.64 L378.54,143.61 L378.03,143.61 L377.52,143.64 L377.01,143.69 L376.49,143.77 L375.97,143.88 L375.44,144.02 L374.92,144.20 L374.40,144.40 L373.89,144.64 L373.38,144.91 L372.88,145.22 L372.40,145.56 L371.93,145.94 L371.48,146.34 L371.05,146.79 L370.64,147.26 L370.26,147.77 L369.91,148.30 L369.59,148.86 L369.31,149.45 L369.07,150.07 L368.86,150.70 L368.70,151.36 L368.58,152.02 L368.51,152.70 L368.49,153.39 L368.52,154.08 L368.59,154.78 L368.72,155.47 L368.90,156.15 L369.12,156.82 L369.40,157.47 L369.72,158.10 L370.08,158.71 L370.50,159.29 L370.95,159.84 L371.44,160.36Z" fill="#b6c41c"/>
<path d="M380.61,151.19 L389.66,159.82 L390.02,159.46 L381.39,150.41Z" fill="#7a7a7a"/><circle cx="381.00" cy="150.80" r="0.55" fill="#7a7a7a"/>
<circle cx="387" cy="165.10000000000002" r="1.6" fill="none" stroke="#dadada" stroke-width="1.1"/>
<path d="M392.4,163.00000000000003 h2.6 M393.7,163.00000000000003 v4.6 M392.0,165.70000000000002 h3.4" stroke="#dadada" stroke-width="0.9" fill="none"/><path d="M392.8,163.10000000000002 h1.8 v2.4 h-1.8z" fill="#dadada"/>
<path d="M464.10,161.70 L463.53,161.10 L463.01,160.47 L462.51,159.81 L462.06,159.11 L461.65,158.40 L461.29,157.66 L460.96,156.90 L460.69,156.13 L460.45,155.33 L460.27,154.53 L460.13,153.72 L460.04,152.90 L460.00,152.07 L460.01,151.25 L460.07,150.43 L460.17,149.61 L460.33,148.80 L460.53,148.00 L460.77,147.21 L461.07,146.44 L461.40,145.69 L461.79,144.96 L462.21,144.25 L462.67,143.57 L463.18,142.92 L463.72,142.30 L464.30,141.71 L464.91,141.15 L465.55,140.64 L466.22,140.16 L466.92,139.72 L467.64,139.33 L468.39,138.97 L469.15,138.67 L469.94,138.40 L470.73,138.19 L471.54,138.02 L472.35,137.90 L473.18,137.82 L474.00,137.80 L474.82,137.82 L475.65,137.90 L476.46,138.02 L477.27,138.19 L478.06,138.40 L478.85,138.67 L479.61,138.97 L480.36,139.33 L481.08,139.72 L481.78,140.16 L482.45,140.64 L483.09,141.15 L483.70,141.71 L484.28,142.30 L484.82,142.92 L485.33,143.57 L485.79,144.25 L486.21,144.96 L486.60,145.69 L486.93,146.44 L487.23,147.21 L487.47,148.00 L487.67,148.80 L487.83,149.61 L487.93,150.43 L487.99,151.25 L488.00,152.07 L487.96,152.90 L487.87,153.72 L487.73,154.53 L487.55,155.33 L487.31,156.13 L487.04,156.90 L486.71,157.66 L486.35,158.40 L485.94,159.11 L485.49,159.81 L484.99,160.47 L484.47,161.10 L483.90,161.70 L480.61,158.41 L480.88,157.92 L481.13,157.42 L481.34,156.92 L481.52,156.41 L481.67,155.90 L481.80,155.39 L481.89,154.89 L481.95,154.38 L481.99,153.89 L482.01,153.39 L482.00,152.91 L481.96,152.43 L481.91,151.96 L481.83,151.49 L481.73,151.04 L481.61,150.60 L481.47,150.16 L481.31,149.74 L481.13,149.33 L480.94,148.93 L480.73,148.54 L480.50,148.16 L480.26,147.79 L480.00,147.44 L479.73,147.10 L479.44,146.77 L479.14,146.46 L478.82,146.15 L478.49,145.87 L478.15,145.59 L477.79,145.33 L477.42,145.09 L477.03,144.86 L476.64,144.65 L476.23,144.46 L475.81,144.28 L475.37,144.12 L474.93,143.98 L474.47,143.87 L474.00,143.77 L473.52,143.69 L473.03,143.64 L472.54,143.61 L472.03,143.61 L471.52,143.64 L471.01,143.69 L470.49,143.77 L469.97,143.88 L469.44,144.02 L468.92,144.20 L468.40,144.40 L467.89,144.64 L467.38,144.91 L466.88,145.22 L466.40,145.56 L465.93,145.94 L465.48,146.34 L465.05,146.79 L464.64,147.26 L464.26,147.77 L463.91,148.30 L463.59,148.86 L463.31,149.45 L463.07,150.07 L462.86,150.70 L462.70,151.36 L462.58,152.02 L462.51,152.70 L462.49,153.39 L462.52,154.08 L462.59,154.78 L462.72,155.47 L462.90,156.15 L463.12,156.82 L463.40,157.47 L463.72,158.10 L464.08,158.71 L464.50,159.29 L464.95,159.84 L465.44,160.36Z" fill="#b6c41c"/>
<path d="M474.61,151.19 L483.66,159.82 L484.02,159.46 L475.39,150.41Z" fill="#7a7a7a"/><circle cx="475.00" cy="150.80" r="0.55" fill="#7a7a7a"/>
<circle cx="481" cy="165.10000000000002" r="1.6" fill="none" stroke="#dadada" stroke-width="1.1"/>
<path d="M486.4,163.00000000000003 h2.6 M487.7,163.00000000000003 v4.6 M486.0,165.70000000000002 h3.4" stroke="#dadada" stroke-width="0.9" fill="none"/><path d="M486.8,163.10000000000002 h1.8 v2.4 h-1.8z" fill="#dadada"/>
<path d="M558.10,161.70 L557.53,161.10 L557.01,160.47 L556.51,159.81 L556.06,159.11 L555.65,158.40 L555.29,157.66 L554.96,156.90 L554.69,156.13 L554.45,155.33 L554.27,154.53 L554.13,153.72 L554.04,152.90 L554.00,152.07 L554.01,151.25 L554.07,150.43 L554.17,149.61 L554.33,148.80 L554.53,148.00 L554.77,147.21 L555.07,146.44 L555.40,145.69 L555.79,144.96 L556.21,144.25 L556.67,143.57 L557.18,142.92 L557.72,142.30 L558.30,141.71 L558.91,141.15 L559.55,140.64 L560.22,140.16 L560.92,139.72 L561.64,139.33 L562.39,138.97 L563.15,138.67 L563.94,138.40 L564.73,138.19 L565.54,138.02 L566.35,137.90 L567.18,137.82 L568.00,137.80 L568.82,137.82 L569.65,137.90 L570.46,138.02 L571.27,138.19 L572.06,138.40 L572.85,138.67 L573.61,138.97 L574.36,139.33 L575.08,139.72 L575.78,140.16 L576.45,140.64 L577.09,141.15 L577.70,141.71 L578.28,142.30 L578.82,142.92 L579.33,143.57 L579.79,144.25 L580.21,144.96 L580.60,145.69 L580.93,146.44 L581.23,147.21 L581.47,148.00 L581.67,148.80 L581.83,149.61 L581.93,150.43 L581.99,151.25 L582.00,152.07 L581.96,152.90 L581.87,153.72 L581.73,154.53 L581.55,155.33 L581.31,156.13 L581.04,156.90 L580.71,157.66 L580.35,158.40 L579.94,159.11 L579.49,159.81 L578.99,160.47 L578.47,161.10 L577.90,161.70 L574.61,158.41 L574.88,157.92 L575.13,157.42 L575.34,156.92 L575.52,156.41 L575.67,155.90 L575.80,155.39 L575.89,154.89 L575.95,154.38 L575.99,153.89 L576.01,153.39 L576.00,152.91 L575.96,152.43 L575.91,151.96 L575.83,151.49 L575.73,151.04 L575.61,150.60 L575.47,150.16 L575.31,149.74 L575.13,149.33 L574.94,148.93 L574.73,148.54 L574.50,148.16 L574.26,147.79 L574.00,147.44 L573.73,147.10 L573.44,146.77 L573.14,146.46 L572.82,146.15 L572.49,145.87 L572.15,145.59 L571.79,145.33 L571.42,145.09 L571.03,144.86 L570.64,144.65 L570.23,144.46 L569.81,144.28 L569.37,144.12 L568.93,143.98 L568.47,143.87 L568.00,143.77 L567.52,143.69 L567.03,143.64 L566.54,143.61 L566.03,143.61 L565.52,143.64 L565.01,143.69 L564.49,143.77 L563.97,143.88 L563.44,144.02 L562.92,144.20 L562.40,144.40 L561.89,144.64 L561.38,144.91 L560.88,145.22 L560.40,145.56 L559.93,145.94 L559.48,146.34 L559.05,146.79 L558.64,147.26 L558.26,147.77 L557.91,148.30 L557.59,148.86 L557.31,149.45 L557.07,150.07 L556.86,150.70 L556.70,151.36 L556.58,152.02 L556.51,152.70 L556.49,153.39 L556.52,154.08 L556.59,154.78 L556.72,155.47 L556.90,156.15 L557.12,156.82 L557.40,157.47 L557.72,158.10 L558.08,158.71 L558.50,159.29 L558.95,159.84 L559.44,160.36Z" fill="#b6c41c"/>
<path d="M568.61,151.19 L577.66,159.82 L578.02,159.46 L569.39,150.41Z" fill="#7a7a7a"/><circle cx="569.00" cy="150.80" r="0.55" fill="#7a7a7a"/>
<circle cx="575" cy="165.10000000000002" r="1.6" fill="none" stroke="#dadada" stroke-width="1.1"/>
<path d="M580.4000000000001,163.00000000000003 h2.6 M581.7,163.00000000000003 v4.6 M580.0,165.70000000000002 h3.4" stroke="#dadada" stroke-width="0.9" fill="none"/><path d="M580.8000000000001,163.10000000000002 h1.8 v2.4 h-1.8z" fill="#dadada"/>
<path d="M182,9.6 V3.4" stroke="#fff" stroke-width="0.9" fill="none"/><path d="M182.2,4.4 Q184.9,3.9 187.4,4.6 V7.4 Q184.9,6.8 182.2,7.4" stroke="#fff" stroke-width="0.8" fill="none"/>
<polygon points="199.90,3.20 200.87,5.17 203.04,5.48 201.47,7.01 201.84,9.17 199.90,8.15 197.96,9.17 198.33,7.01 196.76,5.48 198.93,5.17" fill="#fff"/>
<polygon points="205.90,3.20 206.87,5.17 209.04,5.48 207.47,7.01 207.84,9.17 205.90,8.15 203.96,9.17 204.33,7.01 202.76,5.48 204.93,5.17" fill="#fff"/>
<polygon points="211.90,3.20 212.87,5.17 215.04,5.48 213.47,7.01 213.84,9.17 211.90,8.15 209.96,9.17 210.33,7.01 208.76,5.48 210.93,5.17" fill="#fff"/>
<polygon points="217.90,3.20 218.87,5.17 221.04,5.48 219.47,7.01 219.84,9.17 217.90,8.15 215.96,9.17 216.33,7.01 214.76,5.48 216.93,5.17" fill="none" stroke="#fff" stroke-width="0.7"/>
<polygon points="223.90,3.20 224.87,5.17 227.04,5.48 225.47,7.01 225.84,9.17 223.90,8.15 221.96,9.17 222.33,7.01 220.76,5.48 222.93,5.17" fill="none" stroke="#fff" stroke-width="0.7"/>
<path d="M37.9,59.9 A3.8,3.8 0 1 1 43.3,59.9" fill="none" stroke="#1a9fdb" stroke-width="1.5"/><path d="M39.4,56.4 L41.4,57.9" stroke="#1a9fdb" stroke-width="0.8"/>
<circle cx="122.6" cy="56.6" r="1.1" fill="#555"/><path d="M120.6,54.2 A3.2,3.2 0 0 0 120.6,59 M124.6,54.2 A3.2,3.2 0 0 1 124.6,59" fill="none" stroke="#8a8a8a" stroke-width="0.9"/><path d="M118.9,53.2 A5,5 0 0 0 118.9,60 M126.3,53.2 A5,5 0 0 1 126.3,60" fill="none" stroke="#9a9a9a" stroke-width="0.9"/>
<path d="M399.6,53.2 V60.6 H409.5" fill="none" stroke="#555" stroke-width="0.9"/><path d="M400.5,59.6 L402,55.6 L403.4,54.6 L405.2,57.6 L406.6,56.4 L408.7,59.6 Z" fill="#444"/>
<rect x="497.7" y="53.5" width="8.2" height="6.4" fill="#f8f8f8" stroke="#555" stroke-width="0.9"/><rect x="497.7" y="53.3" width="8.2" height="1.7" fill="#444"/><path d="M499.2,56.6 h5.2 M499.2,58.3 h5.2" stroke="#bbb" stroke-width="0.6"/>
<circle cx="562" cy="57" r="2.9" fill="#333"/><circle cx="562" cy="57" r="1.2" fill="#f5f5f5"/><rect x="561.2" y="52.8" width="1.6" height="2.2" fill="#333" transform="rotate(0 562 57)"/><rect x="561.2" y="52.8" width="1.6" height="2.2" fill="#333" transform="rotate(45 562 57)"/><rect x="561.2" y="52.8" width="1.6" height="2.2" fill="#333" transform="rotate(90 562 57)"/><rect x="561.2" y="52.8" width="1.6" height="2.2" fill="#333" transform="rotate(135 562 57)"/><rect x="561.2" y="52.8" width="1.6" height="2.2" fill="#333" transform="rotate(180 562 57)"/><rect x="561.2" y="52.8" width="1.6" height="2.2" fill="#333" transform="rotate(225 562 57)"/><rect x="561.2" y="52.8" width="1.6" height="2.2" fill="#333" transform="rotate(270 562 57)"/><rect x="561.2" y="52.8" width="1.6" height="2.2" fill="#333" transform="rotate(315 562 57)"/>
<circle cx="197" cy="209.3" r="1.6" fill="none" stroke="#dadada" stroke-width="1.1"/>
<path d="M203.7,207.20000000000002 h2.6 M205,207.20000000000002 v4.6 M203.3,209.9 h3.4" stroke="#dadada" stroke-width="0.9" fill="none"/><path d="M204.1,207.3 h1.8 v2.4 h-1.8z" fill="#dadada"/>
<path d="M72.3,262.6 h4.8 l-2.4,2.6z" fill="#333"/>
<path d="M153.2,260.3 l2.4,-2.9 l2.4,2.9z M153.2,261.3 l2.4,2.9 l2.4,-2.9z" fill="#d0d0d0"/>
<path d="M242.6,260.3 l2.4,-2.9 l2.4,2.9z M242.6,261.3 l2.4,2.9 l2.4,-2.9z" fill="#d0d0d0"/>
<path d="M368,260.3 l2.4,-2.9 l2.4,2.9z M368,261.3 l2.4,2.9 l2.4,-2.9z" fill="#d0d0d0"/>
<path d="M471.6,260.3 l2.4,-2.9 l2.4,2.9z M471.6,261.3 l2.4,2.9 l2.4,-2.9z" fill="#d0d0d0"/>
<circle cx="532.2" cy="280.60" r="1.2" fill="#9a9a80" stroke="#666" stroke-width="0.6"/><circle cx="536.1" cy="277.20" r="1.9" fill="none" stroke="#3a3a3a" stroke-width="1.2"/>
<circle cx="532.2" cy="298.95" r="1.2" fill="#9a9a80" stroke="#666" stroke-width="0.6"/><circle cx="536.1" cy="295.55" r="1.9" fill="none" stroke="#3a3a3a" stroke-width="1.2"/>
<circle cx="532.2" cy="317.30" r="1.2" fill="#9a9a80" stroke="#666" stroke-width="0.6"/><circle cx="536.1" cy="313.90" r="1.9" fill="none" stroke="#3a3a3a" stroke-width="1.2"/>
<circle cx="532.2" cy="335.65" r="1.2" fill="#9a9a80" stroke="#666" stroke-width="0.6"/><circle cx="536.1" cy="332.25" r="1.9" fill="none" stroke="#3a3a3a" stroke-width="1.2"/>
<circle cx="532.2" cy="354.00" r="1.2" fill="#9a9a80" stroke="#666" stroke-width="0.6"/><circle cx="536.1" cy="350.60" r="1.9" fill="none" stroke="#3a3a3a" stroke-width="1.2"/>
<circle cx="532.2" cy="372.35" r="1.2" fill="#9a9a80" stroke="#666" stroke-width="0.6"/><circle cx="536.1" cy="368.95" r="1.9" fill="none" stroke="#3a3a3a" stroke-width="1.2"/>
<circle cx="532.2" cy="390.70" r="1.2" fill="#9a9a80" stroke="#666" stroke-width="0.6"/><circle cx="536.1" cy="387.30" r="1.9" fill="none" stroke="#3a3a3a" stroke-width="1.2"/>
<circle cx="532.2" cy="409.05" r="1.2" fill="#9a9a80" stroke="#666" stroke-width="0.6"/><circle cx="536.1" cy="405.65" r="1.9" fill="none" stroke="#3a3a3a" stroke-width="1.2"/>
<circle cx="532.2" cy="427.40" r="1.2" fill="#9a9a80" stroke="#666" stroke-width="0.6"/><circle cx="536.1" cy="424.00" r="1.9" fill="none" stroke="#3a3a3a" stroke-width="1.2"/>
<circle cx="532.2" cy="445.75" r="1.2" fill="#9a9a80" stroke="#666" stroke-width="0.6"/><circle cx="536.1" cy="442.35" r="1.9" fill="none" stroke="#3a3a3a" stroke-width="1.2"/>
</svg>
</body></html>
